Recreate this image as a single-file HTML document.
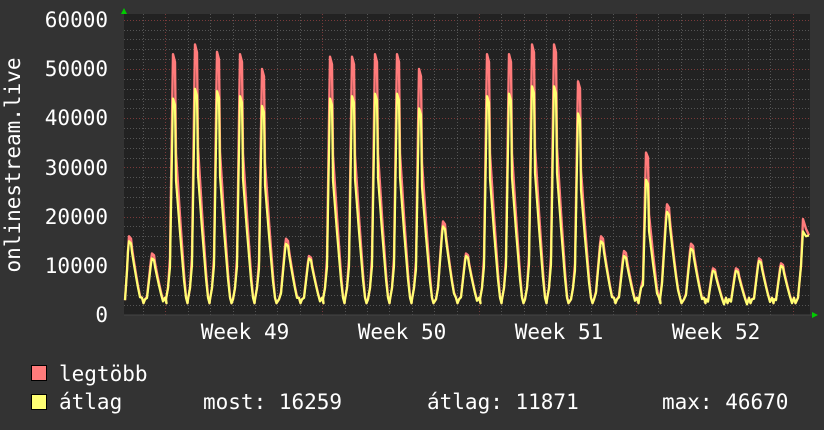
<!DOCTYPE html>
<html><head><meta charset="utf-8"><style>
html,body{margin:0;padding:0;background:#333;}
body{width:824px;height:430px;overflow:hidden;}
svg{display:block;}
text{font-family:"DejaVu Sans Mono","Liberation Mono",monospace;font-size:21px;fill:#fff;}
</style></head><body>
<svg id="g" width="824" height="430" xmlns="http://www.w3.org/2000/svg">
<rect x="0" y="0" width="824" height="430" fill="#333"/>
<rect x="124" y="14" width="686" height="301" fill="#222"/>
<g id="grid"></g>
<path id="red" fill="none" stroke="#ff7b7b" stroke-width="2.4" stroke-linejoin="round"/>
<path id="yel" fill="none" stroke="#ffff73" stroke-width="2.2" stroke-linejoin="round"/>
<line x1="124" y1="315" x2="812" y2="315" stroke="#444" stroke-width="1"/>
<polygon points="121,14 127,14 124,8" fill="#0c0"/>
<polygon points="812,312 812,318 818,315" fill="#0c0"/>
<g text-anchor="end">
<text x="108" y="27">60000</text>
<text x="108" y="76">50000</text>
<text x="108" y="125">40000</text>
<text x="108" y="175">30000</text>
<text x="108" y="224">20000</text>
<text x="108" y="273">10000</text>
<text x="108" y="322">0</text>
</g>
<text transform="translate(20,165) rotate(-90)" text-anchor="middle">onlinestream.live</text>
<g text-anchor="middle">
<text x="245" y="339">Week 49</text>
<text x="402" y="339">Week 50</text>
<text x="559" y="339">Week 51</text>
<text x="716" y="339">Week 52</text>
</g>
<rect x="31.5" y="365.5" width="15" height="15" fill="#ff7b7b" stroke="#000"/>
<rect x="31.5" y="394.5" width="15" height="15" fill="#ffff73" stroke="#000"/>
<text x="59" y="381">legtöbb</text>
<text x="59" y="409">átlag</text>
<text x="203" y="409">most: 16259</text>
<text x="427" y="409">átlag: 11871</text>
<text x="662" y="409">max: 46670</text>
</svg>
<script>
var ns="http://www.w3.org/2000/svg",grid=document.getElementById("grid");
function ln(x1,y1,x2,y2,c){var l=document.createElementNS(ns,"line");l.setAttribute("x1",x1);l.setAttribute("y1",y1);l.setAttribute("x2",x2);l.setAttribute("y2",y2);l.setAttribute("stroke",c);l.setAttribute("stroke-dasharray","1,2");l.setAttribute("stroke-width","1");grid.appendChild(l);}
function Y(v){return 315-v*0.00492;}
for(var v=2000;v<=60000;v+=2000){var y=Math.round(Y(v))+0.5;ln(124,y,810,y,v%10000==0?"#7a3a3a":"#555");}
for(var i=0;i<31;i++){var x=Math.round(143+i*22.4)+0.5;if(x>810)break;ln(x,14,x,315,((i-1)%7==0)?"#7a3a3a":"#555");}
var P=[[130,16000,15000],[153,12500,11500],[174,53000,44000],[196,55000,46000],[218,53500,45500],[241,53000,44500],[263,50000,42500],[287,15500,14500],[310,12000,11500],[331,52500,44000],[353,52500,44500],[376,53000,45000],[398,53000,45000],[420,50000,42000],[444,19000,18000],[467,12500,12000],[488,53000,44500],[510,53000,45000],[533,55000,46500],[555,55000,46500],[579,47500,41000],[602,16000,15000],[625,13000,12000],[647,33000,27500],[668,22500,21000],[692,14500,13500],[714,9500,9000],[737,9500,9000],[760,11500,11000],[782,10500,10000]];
function build(k){
 var pts=[[125,3000],[127,9000],[128,13000]];
 P.forEach(function(p,i){var x=p[0],h=p[k],big=h>25000;
  if(i>0){
  pts.push([x-8,3200]);
  pts.push([x-6,big?5500:h*0.3]);
  pts.push([x-4,big?h*0.22:h*0.6]);
  pts.push([x-2,big?h*0.75:h*0.9]);
  }
  pts.push([x-1,h]);pts.push([x+1,h*0.97]);
  pts.push([x+2,big?h*0.62:h*0.85]);
  pts.push([x+4,big?h*0.5:h*0.68]);
  pts.push([x+6,big?h*0.38:h*0.52]);
  pts.push([x+8,big?h*0.27:h*0.37]);
  pts.push([x+10,big?h*0.16:h*0.24]);
  pts.push([x+12,Math.max(h*0.07,3500)]);
  pts.push([x+13.5,2400]);
 });
 pts.push([798,3500]);pts.push([801,10000]);pts.push([803,k==1?19500:17000]);pts.push([806,k==1?17500:16000]);pts.push([809,16200]);
 return "M"+pts.map(function(q){return q[0]+","+Y(q[1]).toFixed(1);}).join(" L");
}
document.getElementById("red").setAttribute("d",build(1));
document.getElementById("yel").setAttribute("d",build(2));
</script>
</body></html>
